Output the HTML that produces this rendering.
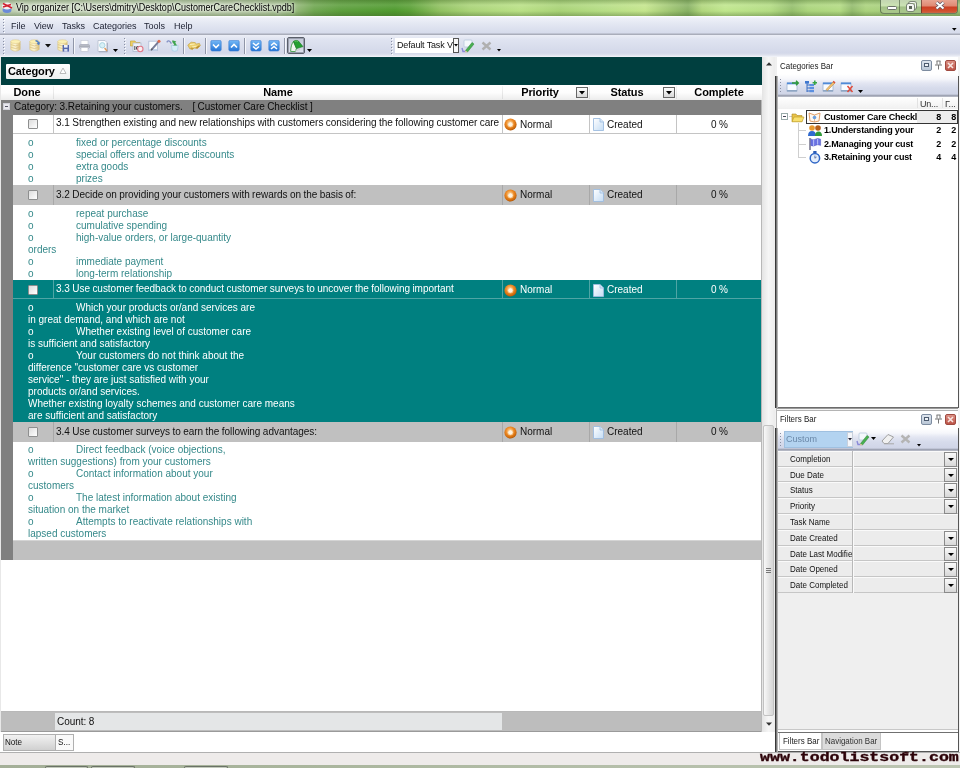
<!DOCTYPE html>
<html><head><meta charset="utf-8"><title>Vip organizer</title>
<style>
*{box-sizing:border-box;margin:0;padding:0}
html,body{width:960px;height:768px;overflow:hidden;background:#fff}
body{font-family:"Liberation Sans",sans-serif;font-size:10px;color:#000;position:relative}
#root{position:absolute;left:0;top:0;width:960px;height:768px;will-change:transform;background:transparent}
.a{position:absolute}
.t{position:absolute;white-space:pre;line-height:12px;font-size:10px;word-spacing:-.3px;letter-spacing:-.03px}
.n{position:absolute;white-space:pre;line-height:12px;font-size:10px;color:#35898a}
.nw{position:absolute;white-space:pre;line-height:12px;font-size:10px;color:#fff}
.b{font-weight:bold}
.ui{position:absolute;white-space:pre;font-size:9px;line-height:11px;color:#1a1a1a}
.hd{position:absolute;white-space:pre;font-size:11px;letter-spacing:-.1px;line-height:13px;font-weight:bold;color:#000}
#title{left:0;top:0;width:960px;height:16px;background:
 linear-gradient(180deg,rgba(80,110,60,.35) 0,rgba(255,255,255,.12) 5px,rgba(255,255,255,0) 11px,rgba(60,90,40,.35) 16px),
 linear-gradient(90deg,#c0d0b3 0,#c9d7be 120px,#bccdad 240px,#adc59a 280px,#8fb573 298px,#6fa650 314px,#5c9e3c 340px,#4f9a2e 395px,#5aa036 410px,#8fc05f 440px,#a9d377 470px,#b9e085 520px,#a8d276 560px,#b4dc83 600px,#c4e58c 645px,#9cc370 672px,#86b062 688px,#b0d67c 702px,#bfe68c 725px,#b3dc83 770px,#94be6c 792px,#aad47b 808px,#b2da82 840px,#92ba6c 852px,#aad27c 866px,#a0c97a 920px,#9cc277 960px)}
#menubar{left:0;top:16px;width:960px;height:19px;background:linear-gradient(180deg,#fff 0,#eef0f8 2px,#e3e7f2 8px,#d6dbeb 17px,#a9adba 18px,#a9adba 19px)}
#toolbar{left:0;top:35px;width:960px;height:22px;background:linear-gradient(180deg,#eceef7 0,#e0e4f1 4px,#d3d8e9 18px,#dfe2ee 20px,#f4f5fa 22px)}
.cb{position:absolute;width:10px;height:10px;border:1px solid #8e8f8f;background:linear-gradient(135deg,#dcdcdc,#fff);border-radius:1px}
.vl{position:absolute;width:1px;background:#c0c0c0}
.hl{position:absolute;height:1px;background:#c0c0c0}
.dd{position:absolute;width:13px;height:14px;border:1px solid #8a8a8a;background:linear-gradient(180deg,#fafafa,#d8d8d8)}
.dd:after{content:"";position:absolute;left:3px;top:5px;border:3px solid transparent;border-top:3px solid #000;border-bottom:none;width:0;height:0}
</style></head><body><div id="root">
<div id="title" class="a"></div>
<div class="ui" style="left:16px;top:2px;font-size:10px;line-height:12px;color:#000;transform-origin:0 50%;transform:scaleX(.903);text-shadow:0 0 3px rgba(255,255,255,.9),0 0 6px rgba(255,255,255,.6)">Vip organizer [C:\Users\dmitry\Desktop\CustomerCareChecklist.vpdb]</div>
<div id="menubar" class="a"></div>
<div class="ui" style="left:11px;top:21px;font-size:9px;color:#1c2030">File</div>
<div class="ui" style="left:34px;top:21px;font-size:9px;color:#1c2030">View</div>
<div class="ui" style="left:62px;top:21px;font-size:9px;color:#1c2030">Tasks</div>
<div class="ui" style="left:93px;top:21px;font-size:9px;color:#1c2030">Categories</div>
<div class="ui" style="left:144px;top:21px;font-size:9px;color:#1c2030">Tools</div>
<div class="ui" style="left:174px;top:21px;font-size:9px;color:#1c2030">Help</div>
<div id="toolbar" class="a"></div>
<div class="a" style="left:0;top:57px;width:1px;height:675px;background:#e8e8e8"></div>
<div class="a" style="left:1px;top:57px;width:761px;height:28px;background:#003f3f"></div>
<div class="a" style="left:6px;top:64px;width:64px;height:15px;background:linear-gradient(180deg,#fff,#eef0f0);border-radius:1px"></div>
<div class="hd" style="left:8px;top:65px">Category</div>
<svg class="a" style="left:59px;top:67px" width="8" height="8"><path d="M1 6.5 L4 1 L7 6.5 Z" fill="#fff" stroke="#b4b4b4" stroke-width=".9"/></svg>
<div class="a" style="left:1px;top:85px;width:761px;height:15px;background:linear-gradient(180deg,#fff 0,#fdfdfd 50%,#ececec 100%)"></div>
<div class="a" style="left:53px;top:86px;width:1px;height:13px;background:linear-gradient(180deg,#f4f4f4,#dcdcdc)"></div>
<div class="a" style="left:502px;top:86px;width:1px;height:13px;background:linear-gradient(180deg,#f4f4f4,#dcdcdc)"></div>
<div class="a" style="left:589px;top:86px;width:1px;height:13px;background:linear-gradient(180deg,#f4f4f4,#dcdcdc)"></div>
<div class="a" style="left:676px;top:86px;width:1px;height:13px;background:linear-gradient(180deg,#f4f4f4,#dcdcdc)"></div>
<div class="hd" style="left:-33px;width:120px;text-align:center;top:86px">Done</div>
<div class="hd" style="left:218px;width:120px;text-align:center;top:86px">Name</div>
<div class="hd" style="left:480px;width:120px;text-align:center;top:86px">Priority</div>
<div class="hd" style="left:567px;width:120px;text-align:center;top:86px">Status</div>
<div class="hd" style="left:659px;width:120px;text-align:center;top:86px">Complete</div>
<div class="a" style="left:576px;top:87px;width:12px;height:11px;border:1px solid #666;background:linear-gradient(180deg,#fff,#d8d8d8)"></div>
<svg class="a" style="left:579px;top:91px" width="7" height="4"><path d="M0 0 L6 0 L3 3.5 Z" fill="#000"/></svg>
<div class="a" style="left:663px;top:87px;width:12px;height:11px;border:1px solid #666;background:linear-gradient(180deg,#fff,#d8d8d8)"></div>
<svg class="a" style="left:666px;top:91px" width="7" height="4"><path d="M0 0 L6 0 L3 3.5 Z" fill="#000"/></svg>
<div class="a" style="left:1px;top:100px;width:760px;height:15px;background:#808080"></div>
<div class="a" style="left:1px;top:115px;width:12px;height:445px;background:#808080"></div>
<div class="a" style="left:3px;top:103px;width:7px;height:7px;background:#e8e8ee;border:1px solid #d0d0d8"></div><div class="a" style="left:5px;top:106px;width:3px;height:1px;background:#556"></div>
<div class="t" style="left:14px;top:101px;color:#0a0a0a">Category: 3.Retaining your customers.    [ Customer Care Checklist ]</div>
<div class="a" style="left:13px;top:115px;width:748px;height:19px;background:#fff"></div>
<div class="vl" style="left:53px;top:115px;height:19px;background:#c4c4c4"></div>
<div class="vl" style="left:502px;top:115px;height:19px;background:#c4c4c4"></div>
<div class="vl" style="left:589px;top:115px;height:19px;background:#c4c4c4"></div>
<div class="vl" style="left:676px;top:115px;height:19px;background:#c4c4c4"></div>
<div class="hl" style="left:13px;top:133px;width:748px;background:#c4c4c4"></div>
<div class="cb" style="left:28px;top:119px"></div>
<div class="t" style="left:56px;top:117px;color:#111;width:445px;overflow:hidden">3.1 Strengthen existing and new relationships with customers considering the following customer care</div>
<svg class="a" style="left:504px;top:118px" width="13" height="13"><defs><radialGradient id="g115" cx="45%" cy="38%" r="62%"><stop offset="0" stop-color="#ffd9a0"/><stop offset=".5" stop-color="#ee8c28"/><stop offset=".85" stop-color="#cf6a0c"/><stop offset="1" stop-color="#a85408"/></radialGradient></defs><circle cx="6.5" cy="6.5" r="6.1" fill="url(#g115)"/><circle cx="6.4" cy="6.4" r="2.7" fill="#fff3e0" stroke="#f4b468" stroke-width=".8"/></svg>
<div class="t" style="left:520px;top:119px;color:#111;letter-spacing:0;word-spacing:0">Normal</div>
<svg class="a" style="left:593px;top:118px" width="11" height="13"><defs><linearGradient id="dg115" x1="0" y1="0" x2="1" y2="1"><stop offset="0" stop-color="#fff"/><stop offset="1" stop-color="#c4dcf4"/></linearGradient></defs><path d="M.5 .5 H7 L10.5 4 V12.5 H.5 Z" fill="url(#dg115)" stroke="#9dbce0" stroke-width=".9"/><path d="M7 .5 V4 H10.5" fill="#d6e6f8" stroke="#9dbce0" stroke-width=".8"/></svg>
<div class="t" style="left:607px;top:119px;color:#111;letter-spacing:0;word-spacing:0">Created</div>
<div class="t" style="left:677px;width:85px;text-align:center;top:119px;color:#111">0 %</div>
<div class="a" style="left:13px;top:185px;width:748px;height:20px;background:#c0c0c0"></div>
<div class="vl" style="left:53px;top:185px;height:20px;background:#a8a8a8"></div>
<div class="vl" style="left:502px;top:185px;height:20px;background:#a8a8a8"></div>
<div class="vl" style="left:589px;top:185px;height:20px;background:#a8a8a8"></div>
<div class="vl" style="left:676px;top:185px;height:20px;background:#a8a8a8"></div>
<div class="cb" style="left:28px;top:190px"></div>
<div class="t" style="left:56px;top:189px;color:#111;width:445px;overflow:hidden">3.2 Decide on providing your customers with rewards on the basis of:</div>
<svg class="a" style="left:504px;top:189px" width="13" height="13"><defs><radialGradient id="g185" cx="45%" cy="38%" r="62%"><stop offset="0" stop-color="#ffd9a0"/><stop offset=".5" stop-color="#ee8c28"/><stop offset=".85" stop-color="#cf6a0c"/><stop offset="1" stop-color="#a85408"/></radialGradient></defs><circle cx="6.5" cy="6.5" r="6.1" fill="url(#g185)"/><circle cx="6.4" cy="6.4" r="2.7" fill="#fff3e0" stroke="#f4b468" stroke-width=".8"/></svg>
<div class="t" style="left:520px;top:189px;color:#111;letter-spacing:0;word-spacing:0">Normal</div>
<svg class="a" style="left:593px;top:189px" width="11" height="13"><defs><linearGradient id="dg185" x1="0" y1="0" x2="1" y2="1"><stop offset="0" stop-color="#fff"/><stop offset="1" stop-color="#c4dcf4"/></linearGradient></defs><path d="M.5 .5 H7 L10.5 4 V12.5 H.5 Z" fill="url(#dg185)" stroke="#9dbce0" stroke-width=".9"/><path d="M7 .5 V4 H10.5" fill="#d6e6f8" stroke="#9dbce0" stroke-width=".8"/></svg>
<div class="t" style="left:607px;top:189px;color:#111;letter-spacing:0;word-spacing:0">Created</div>
<div class="t" style="left:677px;width:85px;text-align:center;top:189px;color:#111">0 %</div>
<div class="a" style="left:13px;top:280px;width:748px;height:19px;background:#008080"></div>
<div class="vl" style="left:53px;top:280px;height:19px;background:#4fa5a5"></div>
<div class="vl" style="left:502px;top:280px;height:19px;background:#4fa5a5"></div>
<div class="vl" style="left:589px;top:280px;height:19px;background:#4fa5a5"></div>
<div class="vl" style="left:676px;top:280px;height:19px;background:#4fa5a5"></div>
<div class="hl" style="left:13px;top:298px;width:748px;background:#4fa5a5"></div>
<div class="cb" style="left:28px;top:285px"></div>
<div class="t" style="left:56px;top:283px;color:#fff;width:445px;overflow:hidden">3.3 Use customer feedback to conduct customer surveys to uncover the following important</div>
<svg class="a" style="left:504px;top:284px" width="13" height="13"><defs><radialGradient id="g280" cx="45%" cy="38%" r="62%"><stop offset="0" stop-color="#ffd9a0"/><stop offset=".5" stop-color="#ee8c28"/><stop offset=".85" stop-color="#cf6a0c"/><stop offset="1" stop-color="#a85408"/></radialGradient></defs><circle cx="6.5" cy="6.5" r="6.1" fill="url(#g280)"/><circle cx="6.4" cy="6.4" r="2.7" fill="#fff3e0" stroke="#f4b468" stroke-width=".8"/></svg>
<div class="t" style="left:520px;top:284px;color:#fff;letter-spacing:0;word-spacing:0">Normal</div>
<svg class="a" style="left:593px;top:284px" width="11" height="13"><defs><linearGradient id="dg280" x1="0" y1="0" x2="1" y2="1"><stop offset="0" stop-color="#fff"/><stop offset="1" stop-color="#c4dcf4"/></linearGradient></defs><path d="M.5 .5 H7 L10.5 4 V12.5 H.5 Z" fill="url(#dg280)" stroke="#9dbce0" stroke-width=".9"/><path d="M7 .5 V4 H10.5" fill="#d6e6f8" stroke="#9dbce0" stroke-width=".8"/></svg>
<div class="t" style="left:607px;top:284px;color:#fff;letter-spacing:0;word-spacing:0">Created</div>
<div class="t" style="left:677px;width:85px;text-align:center;top:284px;color:#fff">0 %</div>
<div class="a" style="left:13px;top:422px;width:748px;height:20px;background:#c0c0c0"></div>
<div class="vl" style="left:53px;top:422px;height:20px;background:#a8a8a8"></div>
<div class="vl" style="left:502px;top:422px;height:20px;background:#a8a8a8"></div>
<div class="vl" style="left:589px;top:422px;height:20px;background:#a8a8a8"></div>
<div class="vl" style="left:676px;top:422px;height:20px;background:#a8a8a8"></div>
<div class="cb" style="left:28px;top:427px"></div>
<div class="t" style="left:56px;top:426px;color:#111;width:445px;overflow:hidden">3.4 Use customer surveys to earn the following advantages:</div>
<svg class="a" style="left:504px;top:426px" width="13" height="13"><defs><radialGradient id="g422" cx="45%" cy="38%" r="62%"><stop offset="0" stop-color="#ffd9a0"/><stop offset=".5" stop-color="#ee8c28"/><stop offset=".85" stop-color="#cf6a0c"/><stop offset="1" stop-color="#a85408"/></radialGradient></defs><circle cx="6.5" cy="6.5" r="6.1" fill="url(#g422)"/><circle cx="6.4" cy="6.4" r="2.7" fill="#fff3e0" stroke="#f4b468" stroke-width=".8"/></svg>
<div class="t" style="left:520px;top:426px;color:#111;letter-spacing:0;word-spacing:0">Normal</div>
<svg class="a" style="left:593px;top:426px" width="11" height="13"><defs><linearGradient id="dg422" x1="0" y1="0" x2="1" y2="1"><stop offset="0" stop-color="#fff"/><stop offset="1" stop-color="#c4dcf4"/></linearGradient></defs><path d="M.5 .5 H7 L10.5 4 V12.5 H.5 Z" fill="url(#dg422)" stroke="#9dbce0" stroke-width=".9"/><path d="M7 .5 V4 H10.5" fill="#d6e6f8" stroke="#9dbce0" stroke-width=".8"/></svg>
<div class="t" style="left:607px;top:426px;color:#111;letter-spacing:0;word-spacing:0">Created</div>
<div class="t" style="left:677px;width:85px;text-align:center;top:426px;color:#111">0 %</div>
<div class="n" style="left:28px;top:137px">o</div><div class="n" style="left:76px;top:137px">fixed or percentage discounts</div>
<div class="n" style="left:28px;top:149px">o</div><div class="n" style="left:76px;top:149px">special offers and volume discounts</div>
<div class="n" style="left:28px;top:161px">o</div><div class="n" style="left:76px;top:161px">extra goods</div>
<div class="n" style="left:28px;top:173px">o</div><div class="n" style="left:76px;top:173px">prizes</div>
<div class="n" style="left:28px;top:208px">o</div><div class="n" style="left:76px;top:208px">repeat purchase</div>
<div class="n" style="left:28px;top:220px">o</div><div class="n" style="left:76px;top:220px">cumulative spending</div>
<div class="n" style="left:28px;top:232px">o</div><div class="n" style="left:76px;top:232px">high-value orders, or large-quantity</div>
<div class="n" style="left:28px;top:244px">orders</div>
<div class="n" style="left:28px;top:256px">o</div><div class="n" style="left:76px;top:256px">immediate payment</div>
<div class="n" style="left:28px;top:268px">o</div><div class="n" style="left:76px;top:268px">long-term relationship</div>
<div class="a" style="left:13px;top:299px;width:748px;height:123px;background:#008080"></div>
<div class="nw" style="left:28px;top:302px">o</div><div class="nw" style="left:76px;top:302px">Which your products or/and services are</div>
<div class="nw" style="left:28px;top:314px">in great demand, and which are not</div>
<div class="nw" style="left:28px;top:326px">o</div><div class="nw" style="left:76px;top:326px">Whether existing level of customer care</div>
<div class="nw" style="left:28px;top:338px">is sufficient and satisfactory</div>
<div class="nw" style="left:28px;top:350px">o</div><div class="nw" style="left:76px;top:350px">Your customers do not think about the</div>
<div class="nw" style="left:28px;top:362px">difference "customer care vs customer</div>
<div class="nw" style="left:28px;top:374px">service" - they are just satisfied with your</div>
<div class="nw" style="left:28px;top:386px">products or/and services.</div>
<div class="nw" style="left:28px;top:398px">Whether existing loyalty schemes and customer care means</div>
<div class="nw" style="left:28px;top:410px">are sufficient and satisfactory</div>
<div class="n" style="left:28px;top:444px">o</div><div class="n" style="left:76px;top:444px">Direct feedback (voice objections,</div>
<div class="n" style="left:28px;top:456px">written suggestions) from your customers</div>
<div class="n" style="left:28px;top:468px">o</div><div class="n" style="left:76px;top:468px">Contact information about your</div>
<div class="n" style="left:28px;top:480px">customers</div>
<div class="n" style="left:28px;top:492px">o</div><div class="n" style="left:76px;top:492px">The latest information about existing</div>
<div class="n" style="left:28px;top:504px">situation on the market</div>
<div class="n" style="left:28px;top:516px">o</div><div class="n" style="left:76px;top:516px">Attempts to reactivate relationships with</div>
<div class="n" style="left:28px;top:528px">lapsed customers</div>
<div class="a" style="left:13px;top:540px;width:748px;height:20px;background:#c0c0c0;border-top:1px solid #d4d4d4"></div>
<div class="a" style="left:761px;top:100px;width:1px;height:632px;background:#b8b8b8"></div>
<div class="a" style="left:762px;top:57px;width:13px;height:675px;background:linear-gradient(90deg,#e4e4e4,#f6f6f6 50%,#ececec)"></div>
<svg class="a" style="left:766px;top:62px" width="6" height="4"><path d="M0 3.5 L3 0.3 L6 3.5 Z" fill="#333"/></svg>
<div class="a" style="left:763px;top:425px;width:11px;height:291px;border:1px solid #c2c2c2;border-radius:2px;background:linear-gradient(90deg,#f8f8f8,#e2e2e2 60%,#d6d6d6)"></div>
<div class="a" style="left:766px;top:568px;width:5px;height:1px;background:#777"></div>
<div class="a" style="left:766px;top:570px;width:5px;height:1px;background:#777"></div>
<div class="a" style="left:766px;top:572px;width:5px;height:1px;background:#777"></div>
<svg class="a" style="left:766px;top:722px" width="6" height="4"><path d="M0 .5 L6 .5 L3 3.7 Z" fill="#333"/></svg>
<div class="a" style="left:1px;top:711px;width:760px;height:1px;background:#b8b8b8"></div>
<div class="a" style="left:1px;top:712px;width:760px;height:19px;background:#bdbdbd"></div>
<div class="a" style="left:55px;top:713px;width:447px;height:17px;background:#e4e6e7"></div>
<div class="t" style="left:57px;top:716px;color:#111">Count: 8</div>
<div class="a" style="left:1px;top:731px;width:760px;height:1px;background:#9a9a9a"></div>
<div class="a" style="left:3px;top:734px;width:53px;height:17px;border:1px solid #b0b0b0;background:linear-gradient(180deg,#f2f2f2,#d0d0d0)"></div>
<div class="a" style="left:56px;top:734px;width:18px;height:17px;border:1px solid #b0b0b0;border-left:none;background:#fafafa"></div>
<div class="ui" style="left:5px;top:737px;font-size:9px;color:#111;transform-origin:0 50%;transform:scaleX(.9)">Note</div>
<div class="ui" style="left:58px;top:737px;font-size:9px;color:#111;transform-origin:0 50%;transform:scaleX(.9)">S...</div>
<div class="a" style="left:0;top:752px;width:960px;height:1px;background:#b0b0b0"></div>
<div class="a" style="left:0;top:753px;width:960px;height:12px;background:#eeebea"></div>
<div class="a" style="left:0;top:765px;width:960px;height:3px;background:linear-gradient(90deg,#a4af98,#a9b59c 300px,#b4bea9 600px,#bcc5b2)"></div>
<div class="a" style="left:45px;top:766px;width:43px;height:4px;border:1px solid #6a7266;border-bottom:none;border-radius:2px 2px 0 0;background:#c3cabc"></div>
<div class="a" style="left:91px;top:766px;width:44px;height:4px;border:1px solid #6a7266;border-bottom:none;border-radius:2px 2px 0 0;background:#c3cabc"></div>
<div class="a" style="left:184px;top:766px;width:44px;height:4px;border:1px solid #6a7266;border-bottom:none;border-radius:2px 2px 0 0;background:#c3cabc"></div>
<div class="a" style="left:3px;top:19px;width:1px;height:1px;background:#8a90a4"></div><div class="a" style="left:4px;top:20px;width:1px;height:1px;background:#fff"></div>
<div class="a" style="left:3px;top:22px;width:1px;height:1px;background:#8a90a4"></div><div class="a" style="left:4px;top:23px;width:1px;height:1px;background:#fff"></div>
<div class="a" style="left:3px;top:25px;width:1px;height:1px;background:#8a90a4"></div><div class="a" style="left:4px;top:26px;width:1px;height:1px;background:#fff"></div>
<div class="a" style="left:3px;top:28px;width:1px;height:1px;background:#8a90a4"></div><div class="a" style="left:4px;top:29px;width:1px;height:1px;background:#fff"></div>
<div class="a" style="left:3px;top:31px;width:1px;height:1px;background:#8a90a4"></div><div class="a" style="left:4px;top:32px;width:1px;height:1px;background:#fff"></div>
<div class="a" style="left:3px;top:38px;width:1px;height:1px;background:#8a90a4"></div><div class="a" style="left:4px;top:39px;width:1px;height:1px;background:#fff"></div>
<div class="a" style="left:3px;top:41px;width:1px;height:1px;background:#8a90a4"></div><div class="a" style="left:4px;top:42px;width:1px;height:1px;background:#fff"></div>
<div class="a" style="left:3px;top:44px;width:1px;height:1px;background:#8a90a4"></div><div class="a" style="left:4px;top:45px;width:1px;height:1px;background:#fff"></div>
<div class="a" style="left:3px;top:47px;width:1px;height:1px;background:#8a90a4"></div><div class="a" style="left:4px;top:48px;width:1px;height:1px;background:#fff"></div>
<div class="a" style="left:3px;top:50px;width:1px;height:1px;background:#8a90a4"></div><div class="a" style="left:4px;top:51px;width:1px;height:1px;background:#fff"></div>
<div class="a" style="left:3px;top:53px;width:1px;height:1px;background:#8a90a4"></div><div class="a" style="left:4px;top:54px;width:1px;height:1px;background:#fff"></div>
<div class="a" style="left:124px;top:38px;width:1px;height:1px;background:#8a90a4"></div><div class="a" style="left:125px;top:39px;width:1px;height:1px;background:#fff"></div>
<div class="a" style="left:124px;top:41px;width:1px;height:1px;background:#8a90a4"></div><div class="a" style="left:125px;top:42px;width:1px;height:1px;background:#fff"></div>
<div class="a" style="left:124px;top:44px;width:1px;height:1px;background:#8a90a4"></div><div class="a" style="left:125px;top:45px;width:1px;height:1px;background:#fff"></div>
<div class="a" style="left:124px;top:47px;width:1px;height:1px;background:#8a90a4"></div><div class="a" style="left:125px;top:48px;width:1px;height:1px;background:#fff"></div>
<div class="a" style="left:124px;top:50px;width:1px;height:1px;background:#8a90a4"></div><div class="a" style="left:125px;top:51px;width:1px;height:1px;background:#fff"></div>
<div class="a" style="left:124px;top:53px;width:1px;height:1px;background:#8a90a4"></div><div class="a" style="left:125px;top:54px;width:1px;height:1px;background:#fff"></div>
<div class="a" style="left:391px;top:38px;width:1px;height:1px;background:#8a90a4"></div><div class="a" style="left:392px;top:39px;width:1px;height:1px;background:#fff"></div>
<div class="a" style="left:391px;top:41px;width:1px;height:1px;background:#8a90a4"></div><div class="a" style="left:392px;top:42px;width:1px;height:1px;background:#fff"></div>
<div class="a" style="left:391px;top:44px;width:1px;height:1px;background:#8a90a4"></div><div class="a" style="left:392px;top:45px;width:1px;height:1px;background:#fff"></div>
<div class="a" style="left:391px;top:47px;width:1px;height:1px;background:#8a90a4"></div><div class="a" style="left:392px;top:48px;width:1px;height:1px;background:#fff"></div>
<div class="a" style="left:391px;top:50px;width:1px;height:1px;background:#8a90a4"></div><div class="a" style="left:392px;top:51px;width:1px;height:1px;background:#fff"></div>
<div class="a" style="left:391px;top:53px;width:1px;height:1px;background:#8a90a4"></div><div class="a" style="left:392px;top:54px;width:1px;height:1px;background:#fff"></div>
<svg class="a" style="left:10px;top:39px" width="14" height="14" viewBox="0 0 14 14"><defs><linearGradient id="dbg10" x1="0" y1="0" x2="1" y2="0"><stop offset="0" stop-color="#f6e9a8"/><stop offset=".45" stop-color="#fbf4d6"/><stop offset="1" stop-color="#d9bd72"/></linearGradient></defs><path d="M.8 2.5 V10.5 Q5.5 13.8 10.2 10.5 V2.5 Z" fill="url(#dbg10)" stroke="#d3bb7c" stroke-width=".5"/><ellipse cx="5.5" cy="2.6" rx="4.7" ry="1.9" fill="#fbf0b4" stroke="#dcc684" stroke-width=".5"/><path d="M.8 5.6 Q5.5 8.3 10.2 5.6 M.8 8.2 Q5.5 10.9 10.2 8.2" fill="none" stroke="#dcc383" stroke-width=".8"/></svg>
<svg class="a" style="left:29px;top:39px" width="14" height="14" viewBox="0 0 14 14"><defs><linearGradient id="dbg29" x1="0" y1="0" x2="1" y2="0"><stop offset="0" stop-color="#f6e9a8"/><stop offset=".45" stop-color="#fbf4d6"/><stop offset="1" stop-color="#d9bd72"/></linearGradient></defs><path d="M.8 2.5 V10.5 Q5.5 13.8 10.2 10.5 V2.5 Z" fill="url(#dbg29)" stroke="#d3bb7c" stroke-width=".5"/><ellipse cx="5.5" cy="2.6" rx="4.7" ry="1.9" fill="#fbf0b4" stroke="#dcc684" stroke-width=".5"/><path d="M.8 5.6 Q5.5 8.3 10.2 5.6 M.8 8.2 Q5.5 10.9 10.2 8.2" fill="none" stroke="#dcc383" stroke-width=".8"/><path d="M6.5 1 Q9.5 .8 10.3 3.6 L11.3 3.3 L10 6.2 L7.6 4.5 L8.8 4.1 Q8.3 2.3 6.5 2.4 Z" fill="#4c7cc4"/></svg>
<svg class="a" style="left:45px;top:44px" width="6" height="4"><path d="M0 0 H6 L3 3.5 Z" fill="#111"/></svg>
<svg class="a" style="left:57px;top:39px" width="14" height="14" viewBox="0 0 14 14"><defs><linearGradient id="dbg57" x1="0" y1="0" x2="1" y2="0"><stop offset="0" stop-color="#f6e9a8"/><stop offset=".45" stop-color="#fbf4d6"/><stop offset="1" stop-color="#d9bd72"/></linearGradient></defs><path d="M.8 2.5 V10.5 Q5.5 13.8 10.2 10.5 V2.5 Z" fill="url(#dbg57)" stroke="#d3bb7c" stroke-width=".5"/><ellipse cx="5.5" cy="2.6" rx="4.7" ry="1.9" fill="#fbf0b4" stroke="#dcc684" stroke-width=".5"/><path d="M.8 5.6 Q5.5 8.3 10.2 5.6 M.8 8.2 Q5.5 10.9 10.2 8.2" fill="none" stroke="#dcc383" stroke-width=".8"/><rect x="5.6" y="6" width="6.4" height="6.6" fill="#5668ac"/><rect x="7" y="6" width="3.6" height="2.6" fill="#eef2fa"/><rect x="7.2" y="10" width="3.2" height="2.6" fill="#d4dcf0"/></svg>
<div class="a" style="left:73px;top:38px;width:1px;height:16px;background:#9096a8"></div><div class="a" style="left:74px;top:38px;width:1px;height:16px;background:#f6f7fb"></div>
<svg class="a" style="left:79px;top:40px" width="11" height="12" viewBox="0 0 11 12"><rect x="2" y=".5" width="7" height="4.5" fill="#fff" stroke="#c4c8d4" stroke-width=".6"/><rect x=".5" y="4.6" width="10" height="3.6" rx="1" fill="#d9dce4" stroke="#9a9eac" stroke-width=".7"/><rect x="1" y="5.6" width="9" height="1" fill="#8c909c"/><rect x="2" y="7.6" width="7" height="4" fill="#fff" stroke="#b8bcc8" stroke-width=".6"/></svg>
<svg class="a" style="left:97px;top:39px" width="12" height="14" viewBox="0 0 12 14"><path d="M1 1.5 H8 L10 3.5 V12.5 H1 Z" fill="#fbfcff" stroke="#b4bccc" stroke-width=".8"/><path d="M10.3 4 V12.8 H2" fill="none" stroke="#98a0b4" stroke-width=".8"/><circle cx="5.3" cy="6.3" r="2.7" fill="#d8f0f6" stroke="#a4d0de" stroke-width=".9"/><path d="M7.6 9 L10 12" stroke="#dc9858" stroke-width="1.4"/></svg>
<svg class="a" style="left:113px;top:49px" width="5" height="3"><path d="M0 0 H5 L2.5 3 Z" fill="#000"/></svg>
<svg class="a" style="left:130px;top:39px" width="14" height="14" viewBox="0 0 14 14"><path d="M0.5 2 H5 L6 3.5 H10 V7 H.5 Z" fill="#f0d060" stroke="#c0a030" stroke-width=".6"/><rect x="3" y="4" width="8" height="8.5" fill="#eef2f8" stroke="#a8b4c8" stroke-width=".7"/><text x="4" y="11" font-size="6" font-family="Liberation Sans" font-weight="bold" fill="#333">IC</text><circle cx="10.3" cy="10" r="2.7" fill="#fbeef0" stroke="#e07888" stroke-width="1.1"/></svg>
<svg class="a" style="left:148px;top:39px" width="14" height="14" viewBox="0 0 14 14"><rect x=".8" y="2.2" width="8.6" height="9.4" fill="#fbfcfe" stroke="#b0bcd4" stroke-width=".8"/><rect x="1.2" y="10" width="7.8" height="1.4" fill="#c4d4ee"/><path d="M3.6 10.6 L10.6 2.6" stroke="#777c98" stroke-width="2"/><path d="M3 11.4 L4.4 9.6" stroke="#5a5a60" stroke-width="1.4"/><circle cx="11" cy="2.2" r="1.5" fill="#e2694a"/></svg>
<svg class="a" style="left:166px;top:39px" width="14" height="14" viewBox="0 0 14 14"><path d="M5.4 6.4 H12.2 L11.4 11.6 Q8.8 13 6.2 11.6 Z" fill="#d6ecf8" stroke="#a8cce4" stroke-width=".7"/><path d="M.8 3.4 Q2.2 .8 4 2.6 Q4.8 3.6 5.4 4.6" stroke="#8390c4" stroke-width="1.3" fill="none"/><path d="M6.4 1.2 L10.4 2.6 L9.2 3.6 L11 6.6 L7.2 6.4 L8.2 5.4 L6.2 3 Z" fill="#41a650"/></svg>
<div class="a" style="left:183px;top:38px;width:1px;height:16px;background:#9096a8"></div><div class="a" style="left:184px;top:38px;width:1px;height:16px;background:#f6f7fb"></div>
<svg class="a" style="left:187px;top:41px" width="14" height="10" viewBox="0 0 14 10"><path d="M.8 4 L4.2 1.2 L8 1.6 L9.6 3 L12.4 2.4 L13.4 4.6 L10.4 7.4 L7 7 L5.4 8.6 L2.6 7.6 Z" fill="#ecd070" stroke="#c09a38" stroke-width=".6"/><path d="M3 3.6 L7.6 3 M5 6 L9.4 5.2" stroke="#fbf0b8" stroke-width="1"/><path d="M8.4 7 L10.4 7.4 L13.2 4.8 L11.6 4.6 Z" fill="#b88c30"/><path d="M3 7.4 L5.4 8.4 L6.8 7 L4.6 6.6 Z" fill="#c49a3a"/></svg>
<div class="a" style="left:205px;top:38px;width:1px;height:16px;background:#9096a8"></div><div class="a" style="left:206px;top:38px;width:1px;height:16px;background:#f6f7fb"></div>
<svg class="a" style="left:210px;top:40px" width="12" height="12" viewBox="0 0 12 12"><defs><linearGradient id="bl210" x1="0" y1="0" x2="0" y2="1"><stop offset="0" stop-color="#74b8f6"/><stop offset="1" stop-color="#2474d6"/></linearGradient></defs><rect x=".8" y=".4" width="10.4" height="10.6" rx="1.4" fill="url(#bl210)" stroke="#3a7cd0" stroke-width=".6"/><path d="M3 4.5 L6 7.5 L9 4.5" stroke="#fff" stroke-width="1.6" fill="none"/></svg>
<svg class="a" style="left:228px;top:40px" width="12" height="12" viewBox="0 0 12 12"><defs><linearGradient id="bl228" x1="0" y1="0" x2="0" y2="1"><stop offset="0" stop-color="#74b8f6"/><stop offset="1" stop-color="#2474d6"/></linearGradient></defs><rect x=".8" y=".4" width="10.4" height="10.6" rx="1.4" fill="url(#bl228)" stroke="#3a7cd0" stroke-width=".6"/><path d="M3 7.5 L6 4.5 L9 7.5" stroke="#fff" stroke-width="1.6" fill="none"/></svg>
<div class="a" style="left:244px;top:38px;width:1px;height:16px;background:#9096a8"></div><div class="a" style="left:245px;top:38px;width:1px;height:16px;background:#f6f7fb"></div>
<svg class="a" style="left:250px;top:40px" width="12" height="12" viewBox="0 0 12 12"><defs><linearGradient id="bl250" x1="0" y1="0" x2="0" y2="1"><stop offset="0" stop-color="#74b8f6"/><stop offset="1" stop-color="#2474d6"/></linearGradient></defs><rect x=".8" y=".4" width="10.4" height="10.6" rx="1.4" fill="url(#bl250)" stroke="#3a7cd0" stroke-width=".6"/><path d="M3 3 L6 5.5 L9 3 M3 6.5 L6 9 L9 6.5" stroke="#fff" stroke-width="1.6" fill="none"/></svg>
<svg class="a" style="left:268px;top:40px" width="12" height="12" viewBox="0 0 12 12"><defs><linearGradient id="bl268" x1="0" y1="0" x2="0" y2="1"><stop offset="0" stop-color="#74b8f6"/><stop offset="1" stop-color="#2474d6"/></linearGradient></defs><rect x=".8" y=".4" width="10.4" height="10.6" rx="1.4" fill="url(#bl268)" stroke="#3a7cd0" stroke-width=".6"/><path d="M3 5.5 L6 3 L9 5.5 M3 9 L6 6.5 L9 9" stroke="#fff" stroke-width="1.6" fill="none"/></svg>
<div class="a" style="left:284px;top:38px;width:1px;height:16px;background:#9096a8"></div><div class="a" style="left:285px;top:38px;width:1px;height:16px;background:#f6f7fb"></div>
<div class="a" style="left:287px;top:37px;width:18px;height:17px;border:1px solid #5a5f6a;border-radius:2px;background:linear-gradient(180deg,#c4c9d8,#dde1ec);box-shadow:inset 0 0 0 1px #9a9fae"></div>
<svg class="a" style="left:289px;top:38px" width="15" height="15" viewBox="0 0 15 15"><path d="M1.6 13.4 Q2 6 4.6 3.4 L7.4 10.4 L6.4 13.6 Z" fill="#f2f6f0" stroke="#3f9a48" stroke-width=".9"/><path d="M6 13 L11 11.4" stroke="#c8d0c8" stroke-width="1"/><path d="M4.4 3.4 Q7 1.4 9.4 3 L14 8.6 L7.6 10.6 Z" fill="#24a030" stroke="#187424" stroke-width=".6"/><path d="M5.6 3.4 Q7.4 2.4 9 3.6" stroke="#6cd070" stroke-width=".8" fill="none"/></svg>
<svg class="a" style="left:307px;top:49px" width="5" height="3"><path d="M0 0 H5 L2.5 3 Z" fill="#000"/></svg>
<div class="a" style="left:395px;top:38px;width:59px;height:15px;background:#fff"></div>
<div class="a" style="left:453px;top:38px;width:6px;height:15px;background:#f8f8f8;border:1px solid #555"></div>
<svg class="a" style="left:454px;top:44px" width="4" height="3"><path d="M0 0 H4 L2 2.5 Z" fill="#000"/></svg>
<div class="ui" style="left:397px;top:40px;font-size:9px;letter-spacing:-.15px;color:#111;width:56px;overflow:hidden">Default Task V</div>
<svg class="a" style="left:461px;top:39px" width="14" height="14" viewBox="0 0 14 14"><path d="M1 9 L2 12.5 H6" fill="none" stroke="#8a8ad8" stroke-width="1.4"/><rect x="3" y="1" width="8" height="7" rx="1" fill="#f4f8fc" stroke="#b8c8dc" stroke-width=".8"/><path d="M4.5 11.5 L11 3.5 L13 5 L6.5 13 Z" fill="#48b050" stroke="#2a8034" stroke-width=".5"/><path d="M4.5 11.5 L4 13.5 L6.5 13 Z" fill="#e8d090"/></svg>
<svg class="a" style="left:481px;top:41px" width="11" height="10"><path d="M1.5 1.5 L9.5 8.5 M9.5 1.5 L1.5 8.5" stroke="#b0b0b0" stroke-width="2.4"/></svg>
<svg class="a" style="left:497px;top:49px" width="4" height="3"><path d="M0 0 H4 L2 2.5 Z" fill="#000"/></svg>
<svg class="a" style="left:952px;top:28px" width="5" height="3"><path d="M0 0 H4.6 L2.3 2.8 Z" fill="#000"/></svg>
<div class="a" style="left:880px;top:0;width:78px;height:14px;border:1px solid rgba(70,90,60,.7);border-top:none;border-radius:0 0 4px 4px;background:linear-gradient(180deg,rgba(255,255,255,.5),rgba(255,255,255,.32) 48%,rgba(150,170,135,.45) 52%,rgba(190,205,175,.4))"></div>
<div class="a" style="left:899px;top:0;width:1px;height:13px;background:rgba(70,90,60,.6)"></div>
<div class="a" style="left:921px;top:0;width:36px;height:13px;border-radius:0 0 3px 0;background:linear-gradient(180deg,#e8a592 0,#e08a74 45%,#cc4024 55%,#d2502e 85%,#c86848 100%);border-left:1px solid rgba(70,40,30,.6)"></div>
<div class="a" style="left:887px;top:6px;width:10px;height:4px;background:#fff;border:1px solid #6a7268;border-radius:1.5px"></div>
<div class="a" style="left:909px;top:2px;width:7px;height:7px;border:1.5px solid #f4f6f2;box-shadow:0 0 0 .8px #6a7268;border-radius:1.5px;background:transparent"></div><div class="a" style="left:907px;top:4px;width:7px;height:7px;border:2px solid #f4f6f2;box-shadow:0 0 0 .8px #6a7268;border-radius:1.5px;background:#5a6458"></div>
<svg class="a" style="left:935px;top:1px" width="10" height="9"><path d="M1.5 1.5 L8.5 7.5 M8.5 1.5 L1.5 7.5" stroke="#556" stroke-width="3.4"/><path d="M1.5 1.5 L8.5 7.5 M8.5 1.5 L1.5 7.5" stroke="#fff" stroke-width="2"/></svg>
<svg class="a" style="left:1px;top:1px" width="13" height="13" viewBox="0 0 13 13"><ellipse cx="6" cy="9" rx="4.5" ry="3" fill="#6a8ad8"/><ellipse cx="6" cy="5" rx="5" ry="3.5" fill="#f4f0f0"/><path d="M2 2.5 L11 7 M2 6 L10 3.5" stroke="#d02030" stroke-width="1.6"/></svg>
<div class="a" style="left:777px;top:57px;width:181px;height:17px;background:#fff"></div>
<div class="ui" style="left:780px;top:61px;font-size:9px;color:#1a1a1a;transform-origin:0 50%;transform:scaleX(.885)">Categories Bar</div>
<div class="a" style="left:921px;top:60px;width:11px;height:11px;border-radius:2px;border:1px solid #7d8ca0;background:linear-gradient(180deg,#dfe6ee,#b9c6d6)"></div>
<div class="a" style="left:924px;top:63px;width:5px;height:4px;border:1px solid #4c5a6e;background:#eef2f6"></div>
<svg class="a" style="left:934px;top:60px" width="9" height="11"><path d="M2.5 1 H6.5 M3 1 V4.5 M6 1 V4.5 M1 5 H8 M4.5 5 V9.5" stroke="#777" stroke-width="1" fill="none"/></svg>
<div class="a" style="left:945px;top:60px;width:11px;height:11px;border-radius:2px;border:1px solid #a04a40;background:linear-gradient(180deg,#dc9084,#bc5448)"></div>
<svg class="a" style="left:947px;top:62px" width="7" height="7"><path d="M1 1 L6 6 M6 1 L1 6" stroke="#f8e4e0" stroke-width="1.6"/></svg>
<div class="a" style="left:777px;top:74px;width:181px;height:23px;background:linear-gradient(180deg,#fff 0,#f6f7fb 5px,#e3e6f2 9px,#d6dbeb 14px,#d0d5e7 20px,#b0b5c5 21px,#8e93a3 22px,#d8dae2 23px)"></div>
<div class="a" style="left:780px;top:79px;width:1px;height:1px;background:#8a90a4"></div>
<div class="a" style="left:780px;top:82px;width:1px;height:1px;background:#8a90a4"></div>
<div class="a" style="left:780px;top:85px;width:1px;height:1px;background:#8a90a4"></div>
<div class="a" style="left:780px;top:88px;width:1px;height:1px;background:#8a90a4"></div>
<div class="a" style="left:780px;top:91px;width:1px;height:1px;background:#8a90a4"></div>
<svg class="a" style="left:786px;top:80px" width="14" height="14" viewBox="0 0 14 14"><rect x="1" y="3" width="10" height="8" fill="#f8fbff" stroke="#9fb4d0" stroke-width=".8"/><rect x="1" y="2.5" width="10" height="1.8" fill="#4f8ad8"/><rect x="1" y="10" width="10" height="1.6" fill="#8fa6c4"/><path d="M6 3 H12 M10 .8 L12.3 3 L10 5.2" stroke="#2f9a3a" stroke-width="1.4" fill="none"/></svg>
<svg class="a" style="left:804px;top:80px" width="14" height="14" viewBox="0 0 14 14"><path d="M3 2 V12 M3 5 H6 M3 8 H6 M3 11 H6" stroke="#3a6fc4" stroke-width="1"/><rect x="1" y="1" width="4" height="2.6" fill="#3f78d0"/><rect x="5.5" y="4" width="4.5" height="2.2" fill="#5b8fe0"/><rect x="5.5" y="7" width="4.5" height="2.2" fill="#5b8fe0"/><rect x="5.5" y="10" width="4.5" height="2.2" fill="#5b8fe0"/><path d="M10.8 .5 V5 M8.6 2.7 H13" stroke="#35a545" stroke-width="1.5"/></svg>
<svg class="a" style="left:822px;top:80px" width="14" height="14" viewBox="0 0 14 14"><rect x="1" y="3" width="10" height="8" fill="#f8fbff" stroke="#9fb4d0" stroke-width=".8"/><rect x="1" y="2.5" width="10" height="1.8" fill="#4f8ad8"/><rect x="1" y="10" width="10" height="1.6" fill="#8fa6c4"/><path d="M4 9.5 L11.5 1.5 L13 3 L5.5 10.5 Z" fill="#f0c070" stroke="#b8843a" stroke-width=".5"/><path d="M11.2 1.3 L13 3" stroke="#d8503a" stroke-width="1.6"/></svg>
<svg class="a" style="left:840px;top:80px" width="14" height="14" viewBox="0 0 14 14"><rect x="1" y="3" width="10" height="8" fill="#f8fbff" stroke="#9fb4d0" stroke-width=".8"/><rect x="1" y="2.5" width="10" height="1.8" fill="#4f8ad8"/><rect x="1" y="10" width="10" height="1.6" fill="#8fa6c4"/><path d="M7.5 6 L12.5 12 M12.5 6 L7.5 12" stroke="#e04a3a" stroke-width="1.5"/></svg>
<svg class="a" style="left:858px;top:90px" width="5" height="3"><path d="M0 0 H5 L2.5 3 Z" fill="#000"/></svg>
<div class="a" style="left:777px;top:97px;width:181px;height:12px;background:linear-gradient(180deg,#fff,#f0f0f0)"></div>
<div class="a" style="left:917px;top:98px;width:1px;height:10px;background:#e2e2e2"></div><div class="a" style="left:942px;top:98px;width:1px;height:10px;background:#e2e2e2"></div>
<div class="ui" style="left:920px;top:99px;font-size:9px;letter-spacing:-.2px;color:#333">Un...</div>
<div class="ui" style="left:945px;top:99px;font-size:9px;letter-spacing:-.2px;color:#333">Г...</div>
<div class="a" style="left:777px;top:109px;width:181px;height:298px;background:#fff"></div>
<div class="a" style="left:777px;top:407px;width:181px;height:1px;background:#6c6c6c"></div><div class="a" style="left:777px;top:408px;width:181px;height:1px;background:#9a9a9a"></div>
<div class="a" style="left:781px;top:113px;width:7px;height:7px;border:1px solid #9aa;background:#fff"></div><div class="a" style="left:783px;top:116px;width:3px;height:1px;background:#445"></div>
<div class="a" style="left:789px;top:116px;width:3px;height:1px;background:#ccc"></div>
<svg class="a" style="left:791px;top:111px" width="14" height="12" viewBox="0 0 14 12"><path d="M1 3 H5 L6 4.5 H11 V10.5 H1 Z" fill="#e8c24a" stroke="#b08a20" stroke-width=".6"/><path d="M3 6 H13 L11 10.8 H1 Z" fill="#f8e070" stroke="#b89820" stroke-width=".6"/></svg>
<div class="a" style="left:798px;top:123px;width:1px;height:35px;background:#cfcfcf"></div>
<div class="a" style="left:798px;top:130px;width:8px;height:1px;background:#cfcfcf"></div>
<div class="a" style="left:798px;top:144px;width:8px;height:1px;background:#cfcfcf"></div>
<div class="a" style="left:798px;top:157px;width:8px;height:1px;background:#cfcfcf"></div>
<div class="a" style="left:806px;top:110px;width:152px;height:14px;border:1px solid #333;background:#fff"></div>
<div class="a" style="left:917px;top:111px;width:40px;height:12px;background:#ececec"></div>
<svg class="a" style="left:808px;top:110px" width="13" height="13" viewBox="0 0 13 13"><path d="M1 3 L6.5 5 L12 3 L11 11 L6.5 12 L2 11 Z" fill="#fdf6ee" stroke="#dc9458" stroke-width=".9"/><path d="M6.5 5 V12" stroke="#d8a070" stroke-width=".7"/><circle cx="6.5" cy="7.5" r="1.8" fill="#6aa0e0"/></svg>
<svg class="a" style="left:808px;top:124px" width="14" height="13" viewBox="0 0 14 13"><circle cx="4" cy="4" r="2.8" fill="#e89a30"/><circle cx="10" cy="4" r="2.8" fill="#b8601a"/><path d="M0 12 Q0 7 4 7 Q8 7 8 12 Z" fill="#2f6ad0"/><path d="M7 12 Q7 7.5 10.5 7.5 Q14 7.5 14 12 Z" fill="#2f9a3a"/></svg>
<svg class="a" style="left:808px;top:137px" width="14" height="14" viewBox="0 0 14 14"><path d="M2 1 V13" stroke="#5a5a78" stroke-width="1.3"/><path d="M2.8 2 Q5.4 3.6 7.4 2.2 Q9.6 .8 12.6 2.2 V8.4 Q9.6 7 7.4 8.4 Q5.4 9.8 2.8 8.4 Z" fill="#6a72e2" stroke="#4a50b8" stroke-width=".5"/><path d="M5.6 3 V9 M9.6 2 V7.6" stroke="#b4bcf6" stroke-width="1.1"/></svg>
<svg class="a" style="left:808px;top:150px" width="14" height="14" viewBox="0 0 14 14"><rect x="5.2" y="1" width="3.4" height="2" rx=".6" fill="#2c5cb4"/><circle cx="6.9" cy="8.2" r="4.7" fill="#e4eefc" stroke="#2f66c6" stroke-width="1.5"/><path d="M6.9 5.6 V8.2 L8.6 7" stroke="#5a6a98" stroke-width=".9" fill="none"/></svg>
<div class="ui b" style="left:824px;top:112px;font-size:9px;letter-spacing:-.17px;color:#000;width:93px;overflow:hidden">Customer Care Checkl</div>
<div class="ui b" style="left:928px;top:112px;font-size:9px;letter-spacing:-.17px;color:#000;width:13px;text-align:right">8</div>
<div class="ui b" style="left:943px;top:112px;font-size:9px;letter-spacing:-.17px;color:#000;width:13px;text-align:right">8</div>
<div class="ui b" style="left:824px;top:125px;font-size:9px;letter-spacing:-.17px;color:#000;width:93px;overflow:hidden">1.Understanding your</div>
<div class="ui b" style="left:928px;top:125px;font-size:9px;letter-spacing:-.17px;color:#000;width:13px;text-align:right">2</div>
<div class="ui b" style="left:943px;top:125px;font-size:9px;letter-spacing:-.17px;color:#000;width:13px;text-align:right">2</div>
<div class="ui b" style="left:824px;top:139px;font-size:9px;letter-spacing:-.17px;color:#000;width:93px;overflow:hidden">2.Managing your cust</div>
<div class="ui b" style="left:928px;top:139px;font-size:9px;letter-spacing:-.17px;color:#000;width:13px;text-align:right">2</div>
<div class="ui b" style="left:943px;top:139px;font-size:9px;letter-spacing:-.17px;color:#000;width:13px;text-align:right">2</div>
<div class="ui b" style="left:824px;top:152px;font-size:9px;letter-spacing:-.17px;color:#000;width:93px;overflow:hidden">3.Retaining your cust</div>
<div class="ui b" style="left:928px;top:152px;font-size:9px;letter-spacing:-.17px;color:#000;width:13px;text-align:right">4</div>
<div class="ui b" style="left:943px;top:152px;font-size:9px;letter-spacing:-.17px;color:#000;width:13px;text-align:right">4</div>
<div class="a" style="left:777px;top:409px;width:181px;height:2px;background:#f4f4f4"></div>
<div class="a" style="left:777px;top:410px;width:181px;height:1px;background:#b4b4b4"></div>
<div class="a" style="left:777px;top:411px;width:181px;height:17px;background:#fff"></div>
<div class="ui" style="left:780px;top:414px;font-size:9px;color:#1a1a1a;transform-origin:0 50%;transform:scaleX(.885)">Filters Bar</div>
<div class="a" style="left:921px;top:414px;width:11px;height:11px;border-radius:2px;border:1px solid #7d8ca0;background:linear-gradient(180deg,#dfe6ee,#b9c6d6)"></div>
<div class="a" style="left:924px;top:417px;width:5px;height:4px;border:1px solid #4c5a6e;background:#eef2f6"></div>
<svg class="a" style="left:934px;top:414px" width="9" height="11"><path d="M2.5 1 H6.5 M3 1 V4.5 M6 1 V4.5 M1 5 H8 M4.5 5 V9.5" stroke="#777" stroke-width="1" fill="none"/></svg>
<div class="a" style="left:945px;top:414px;width:11px;height:11px;border-radius:2px;border:1px solid #a04a40;background:linear-gradient(180deg,#dc9084,#bc5448)"></div>
<svg class="a" style="left:947px;top:416px" width="7" height="7"><path d="M1 1 L6 6 M6 1 L1 6" stroke="#f8e4e0" stroke-width="1.6"/></svg>
<div class="a" style="left:777px;top:428px;width:181px;height:23px;background:linear-gradient(180deg,#fff 0,#f6f7fb 5px,#e3e6f2 9px,#d6dbeb 14px,#d0d5e7 20px,#b0b5c5 21px,#8e93a3 22px,#d8dae2 23px)"></div>
<div class="a" style="left:780px;top:433px;width:1px;height:1px;background:#8a90a4"></div>
<div class="a" style="left:780px;top:436px;width:1px;height:1px;background:#8a90a4"></div>
<div class="a" style="left:780px;top:439px;width:1px;height:1px;background:#8a90a4"></div>
<div class="a" style="left:780px;top:442px;width:1px;height:1px;background:#8a90a4"></div>
<div class="a" style="left:780px;top:445px;width:1px;height:1px;background:#8a90a4"></div>
<div class="a" style="left:784px;top:431px;width:69px;height:17px;background:#b3d3f0;border:1px solid #9fc0e0"></div>
<div class="a" style="left:847px;top:432px;width:6px;height:15px;background:#f4f6fa;border:1px solid #c8d0dc"></div>
<svg class="a" style="left:848px;top:438px" width="4" height="3"><path d="M0 0 H4 L2 2.5 Z" fill="#223"/></svg>
<div class="ui" style="left:786px;top:434px;font-size:9px;color:#6a88a8">Custom</div>
<svg class="a" style="left:856px;top:432px" width="14" height="14" viewBox="0 0 14 14"><path d="M1 9 L2 12.5 H6" fill="none" stroke="#8a8ad8" stroke-width="1.4"/><rect x="3" y="1" width="8" height="7" rx="1" fill="#f4f8fc" stroke="#b8c8dc" stroke-width=".8"/><path d="M4.5 11.5 L11 3.5 L13 5 L6.5 13 Z" fill="#48b050" stroke="#2a8034" stroke-width=".5"/><path d="M4.5 11.5 L4 13.5 L6.5 13 Z" fill="#e8d090"/></svg>
<svg class="a" style="left:871px;top:437px" width="5" height="3"><path d="M0 0 H5 L2.5 3 Z" fill="#000"/></svg>
<svg class="a" style="left:881px;top:433px" width="14" height="12" viewBox="0 0 14 12"><path d="M1 8 L7 1.5 L12.5 4 L7 10.5 H3 Z" fill="#f0f0f0" stroke="#a0a0a0" stroke-width="1"/><path d="M3 10.8 H13" stroke="#a8a8a8" stroke-width="1"/></svg>
<svg class="a" style="left:900px;top:434px" width="11" height="10"><path d="M1.5 1.5 L9.5 8.5 M9.5 1.5 L1.5 8.5" stroke="#b4b4b4" stroke-width="2.4"/></svg>
<svg class="a" style="left:917px;top:444px" width="4" height="3"><path d="M0 0 H4 L2 2.5 Z" fill="#000"/></svg>
<div class="a" style="left:777px;top:451px;width:181px;height:278px;background:#efefef"></div>
<div class="a" style="left:778px;top:451px;width:180px;height:16px;background:#ececec;border-bottom:1px solid #c6c6c6;border-top:1px solid #fafafa"></div>
<div class="a" style="left:790px;top:451px;width:62px;height:15px;overflow:hidden"><div class="ui" style="left:0;top:3px;font-size:9px;color:#111;transform-origin:0 50%;transform:scaleX(.89)">Completion</div></div>
<div class="dd" style="left:944px;top:452px;height:15px"></div>
<div class="a" style="left:778px;top:467px;width:180px;height:15px;background:#ececec;border-bottom:1px solid #c6c6c6;border-top:1px solid #fafafa"></div>
<div class="a" style="left:790px;top:467px;width:62px;height:15px;overflow:hidden"><div class="ui" style="left:0;top:3px;font-size:9px;color:#111;transform-origin:0 50%;transform:scaleX(.89)">Due Date</div></div>
<div class="dd" style="left:944px;top:468px;height:14px"></div>
<div class="a" style="left:778px;top:482px;width:180px;height:16px;background:#ececec;border-bottom:1px solid #c6c6c6;border-top:1px solid #fafafa"></div>
<div class="a" style="left:790px;top:482px;width:62px;height:15px;overflow:hidden"><div class="ui" style="left:0;top:3px;font-size:9px;color:#111;transform-origin:0 50%;transform:scaleX(.89)">Status</div></div>
<div class="dd" style="left:944px;top:483px;height:15px"></div>
<div class="a" style="left:778px;top:498px;width:180px;height:16px;background:#ececec;border-bottom:1px solid #c6c6c6;border-top:1px solid #fafafa"></div>
<div class="a" style="left:790px;top:498px;width:62px;height:15px;overflow:hidden"><div class="ui" style="left:0;top:3px;font-size:9px;color:#111;transform-origin:0 50%;transform:scaleX(.89)">Priority</div></div>
<div class="dd" style="left:944px;top:499px;height:15px"></div>
<div class="a" style="left:778px;top:514px;width:180px;height:16px;background:#ececec;border-bottom:1px solid #c6c6c6;border-top:1px solid #fafafa"></div>
<div class="a" style="left:790px;top:514px;width:62px;height:15px;overflow:hidden"><div class="ui" style="left:0;top:3px;font-size:9px;color:#111;transform-origin:0 50%;transform:scaleX(.89)">Task Name</div></div>
<div class="a" style="left:778px;top:530px;width:180px;height:16px;background:#ececec;border-bottom:1px solid #c6c6c6;border-top:1px solid #fafafa"></div>
<div class="a" style="left:790px;top:530px;width:62px;height:15px;overflow:hidden"><div class="ui" style="left:0;top:3px;font-size:9px;color:#111;transform-origin:0 50%;transform:scaleX(.89)">Date Created</div></div>
<div class="dd" style="left:944px;top:531px;height:15px"></div>
<div class="a" style="left:778px;top:546px;width:180px;height:15px;background:#ececec;border-bottom:1px solid #c6c6c6;border-top:1px solid #fafafa"></div>
<div class="a" style="left:790px;top:546px;width:62px;height:15px;overflow:hidden"><div class="ui" style="left:0;top:3px;font-size:9px;color:#111;transform-origin:0 50%;transform:scaleX(.89)">Date Last Modifie</div></div>
<div class="dd" style="left:944px;top:547px;height:14px"></div>
<div class="a" style="left:778px;top:561px;width:180px;height:16px;background:#ececec;border-bottom:1px solid #c6c6c6;border-top:1px solid #fafafa"></div>
<div class="a" style="left:790px;top:561px;width:62px;height:15px;overflow:hidden"><div class="ui" style="left:0;top:3px;font-size:9px;color:#111;transform-origin:0 50%;transform:scaleX(.89)">Date Opened</div></div>
<div class="dd" style="left:944px;top:562px;height:15px"></div>
<div class="a" style="left:778px;top:577px;width:180px;height:16px;background:#ececec;border-bottom:1px solid #c6c6c6;border-top:1px solid #fafafa"></div>
<div class="a" style="left:790px;top:577px;width:62px;height:15px;overflow:hidden"><div class="ui" style="left:0;top:3px;font-size:9px;color:#111;transform-origin:0 50%;transform:scaleX(.89)">Date Completed</div></div>
<div class="dd" style="left:944px;top:578px;height:15px"></div>
<div class="a" style="left:852px;top:451px;width:1px;height:142px;background:#b8b8b8"></div><div class="a" style="left:853px;top:451px;width:1px;height:142px;background:#fafafa"></div>
<div class="a" style="left:777px;top:593px;width:181px;height:136px;background:#efefef"></div>
<div class="a" style="left:777px;top:729px;width:181px;height:1px;background:#c8c8c8"></div>
<div class="a" style="left:777px;top:730px;width:181px;height:2px;background:#fff"></div>
<div class="a" style="left:777px;top:732px;width:181px;height:1px;background:#707070"></div>
<div class="a" style="left:777px;top:733px;width:181px;height:18px;background:#fff"></div>
<div class="a" style="left:822px;top:733px;width:59px;height:17px;background:#dcdcdc;border:1px solid #c4c4c4;border-top:none"></div>
<div class="a" style="left:779px;top:733px;width:43px;height:17px;border:1px solid #c4c4c4;border-top:none;background:#fff"></div>
<div class="ui" style="left:783px;top:736px;font-size:9px;color:#222;transform-origin:0 50%;transform:scaleX(.885)">Filters Bar</div>
<div class="ui" style="left:825px;top:736px;font-size:9px;color:#333;transform-origin:0 50%;transform:scaleX(.885)">Navigation Bar</div>
<div class="a" style="left:775px;top:751px;width:185px;height:1px;background:#555"></div>
<div class="a" style="left:760px;top:751px;font-family:'Liberation Mono',monospace;font-weight:bold;font-size:12.5px;line-height:14px;white-space:pre;color:#2c0208;-webkit-text-stroke:.35px #2c0208;transform-origin:0 50%;transform:scaleX(1.325)">www.todolistsoft.com</div>
<div class="a" style="left:775px;top:57px;width:2px;height:695px;background:#f0f0f0"></div>
<div class="a" style="left:775px;top:76px;width:1px;height:332px;background:#383838"></div><div class="a" style="left:776px;top:76px;width:1px;height:332px;background:#7c7c7c"></div><div class="a" style="left:777px;top:76px;width:1px;height:332px;background:#b4b4b4"></div>
<div class="a" style="left:776px;top:408px;width:1px;height:20px;background:#b4b4b4"></div>
<div class="a" style="left:775px;top:428px;width:1px;height:324px;background:#383838"></div><div class="a" style="left:776px;top:428px;width:1px;height:324px;background:#7c7c7c"></div><div class="a" style="left:777px;top:428px;width:1px;height:324px;background:#b4b4b4"></div>
<div class="a" style="left:958px;top:57px;width:2px;height:695px;background:#f4f4f4"></div>
<div class="a" style="left:958px;top:76px;width:1px;height:332px;background:#555"></div>
<div class="a" style="left:958px;top:428px;width:1px;height:324px;background:#555"></div>
</div></body></html>
